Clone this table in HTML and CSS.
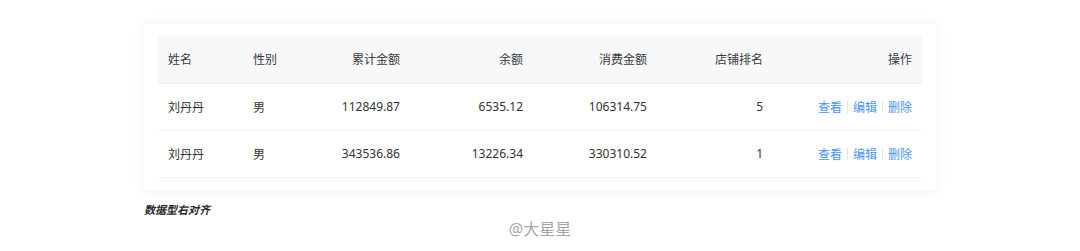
FILE: index.html
```html
<!DOCTYPE html>
<html lang="zh">
<head>
<meta charset="utf-8">
<link rel="stylesheet" href="styles.css">
</head>
<body>
<div class="wrap">
  <div class="card">
    <table class="tbl">
      <colgroup>
        <col class="c1"><col class="c2"><col class="c3"><col class="c4"><col class="c5"><col class="c6"><col class="c7">
      </colgroup>
      <thead>
        <tr>
          <th>姓名</th><th>性别</th><th class="r">累计金额</th><th class="r">余额</th><th class="r">消费金额</th><th class="r">店铺排名</th><th class="r">操作</th>
        </tr>
      </thead>
      <tbody>
        <tr>
          <td>刘丹丹</td><td>男</td><td class="r">112849.87</td><td class="r">6535.12</td><td class="r">106314.75</td><td class="r">5</td>
          <td class="r"><a class="lk">查看</a><span class="sep"></span><a class="lk">编辑</a><span class="sep"></span><a class="lk">删除</a></td>
        </tr>
        <tr>
          <td>刘丹丹</td><td>男</td><td class="r">343536.86</td><td class="r">13226.34</td><td class="r">330310.52</td><td class="r">1</td>
          <td class="r"><a class="lk">查看</a><span class="sep"></span><a class="lk">编辑</a><span class="sep"></span><a class="lk">删除</a></td>
        </tr>
      </tbody>
    </table>
  </div>
  <div class="caption">数据型右对齐</div>
</div>
<div class="mark">@大星星</div>
</body>
</html>
```
FILE: styles.css
```css
html, body {
  margin: 0;
  padding: 0;
  background: #ffffff;
  font-family: "Noto Sans", "Noto Sans CJK SC", sans-serif;
}
.wrap {
  width: 792px;
  margin: 24px auto 0;
}
.card {
  background: #fff;
  padding: 12px 14px 12px;
  box-shadow: 0 0 12px rgba(40, 60, 120, 0.07);
}
.tbl {
  width: 764px;
  border-collapse: collapse;
  table-layout: fixed;
  font-size: 12px;
  color: #333;
}
.c1 { width: 85px; }
.c2 { width: 44px; }
.c3 { width: 123px; }
.c4 { width: 123px; }
.c5 { width: 124px; }
.c6 { width: 116px; }
.c7 { width: 149px; }
.tbl th {
  background: #f7f8fa;
  font-weight: normal;
  color: #3a3a3a;
  height: 47px;
  padding: 0 10px;
  text-align: left;
  border-bottom: 1px solid #eef0f3;
  box-sizing: border-box;
}
.tbl td {
  height: 47px;
  padding: 0 10px;
  text-align: left;
  border-bottom: 1px solid #eef0f3;
  box-sizing: border-box;
}
.tbl .r { text-align: right; }
.lk {
  color: #4a94f5;
  cursor: pointer;
}
.sep {
  display: inline-block;
  width: 1px;
  height: 12px;
  background: #e3e6ea;
  margin: 0 5px;
  vertical-align: -1px;
}
.caption {
  margin-top: 12px;
  font-size: 11px;
  line-height: 16px;
  font-weight: bold;
  font-style: italic;
  color: #2b2b2b;
}
.mark {
  text-align: center;
  font-size: 16px;
  line-height: 20px;
  color: #a6a6a6;
  margin-top: 1px;
}
```
